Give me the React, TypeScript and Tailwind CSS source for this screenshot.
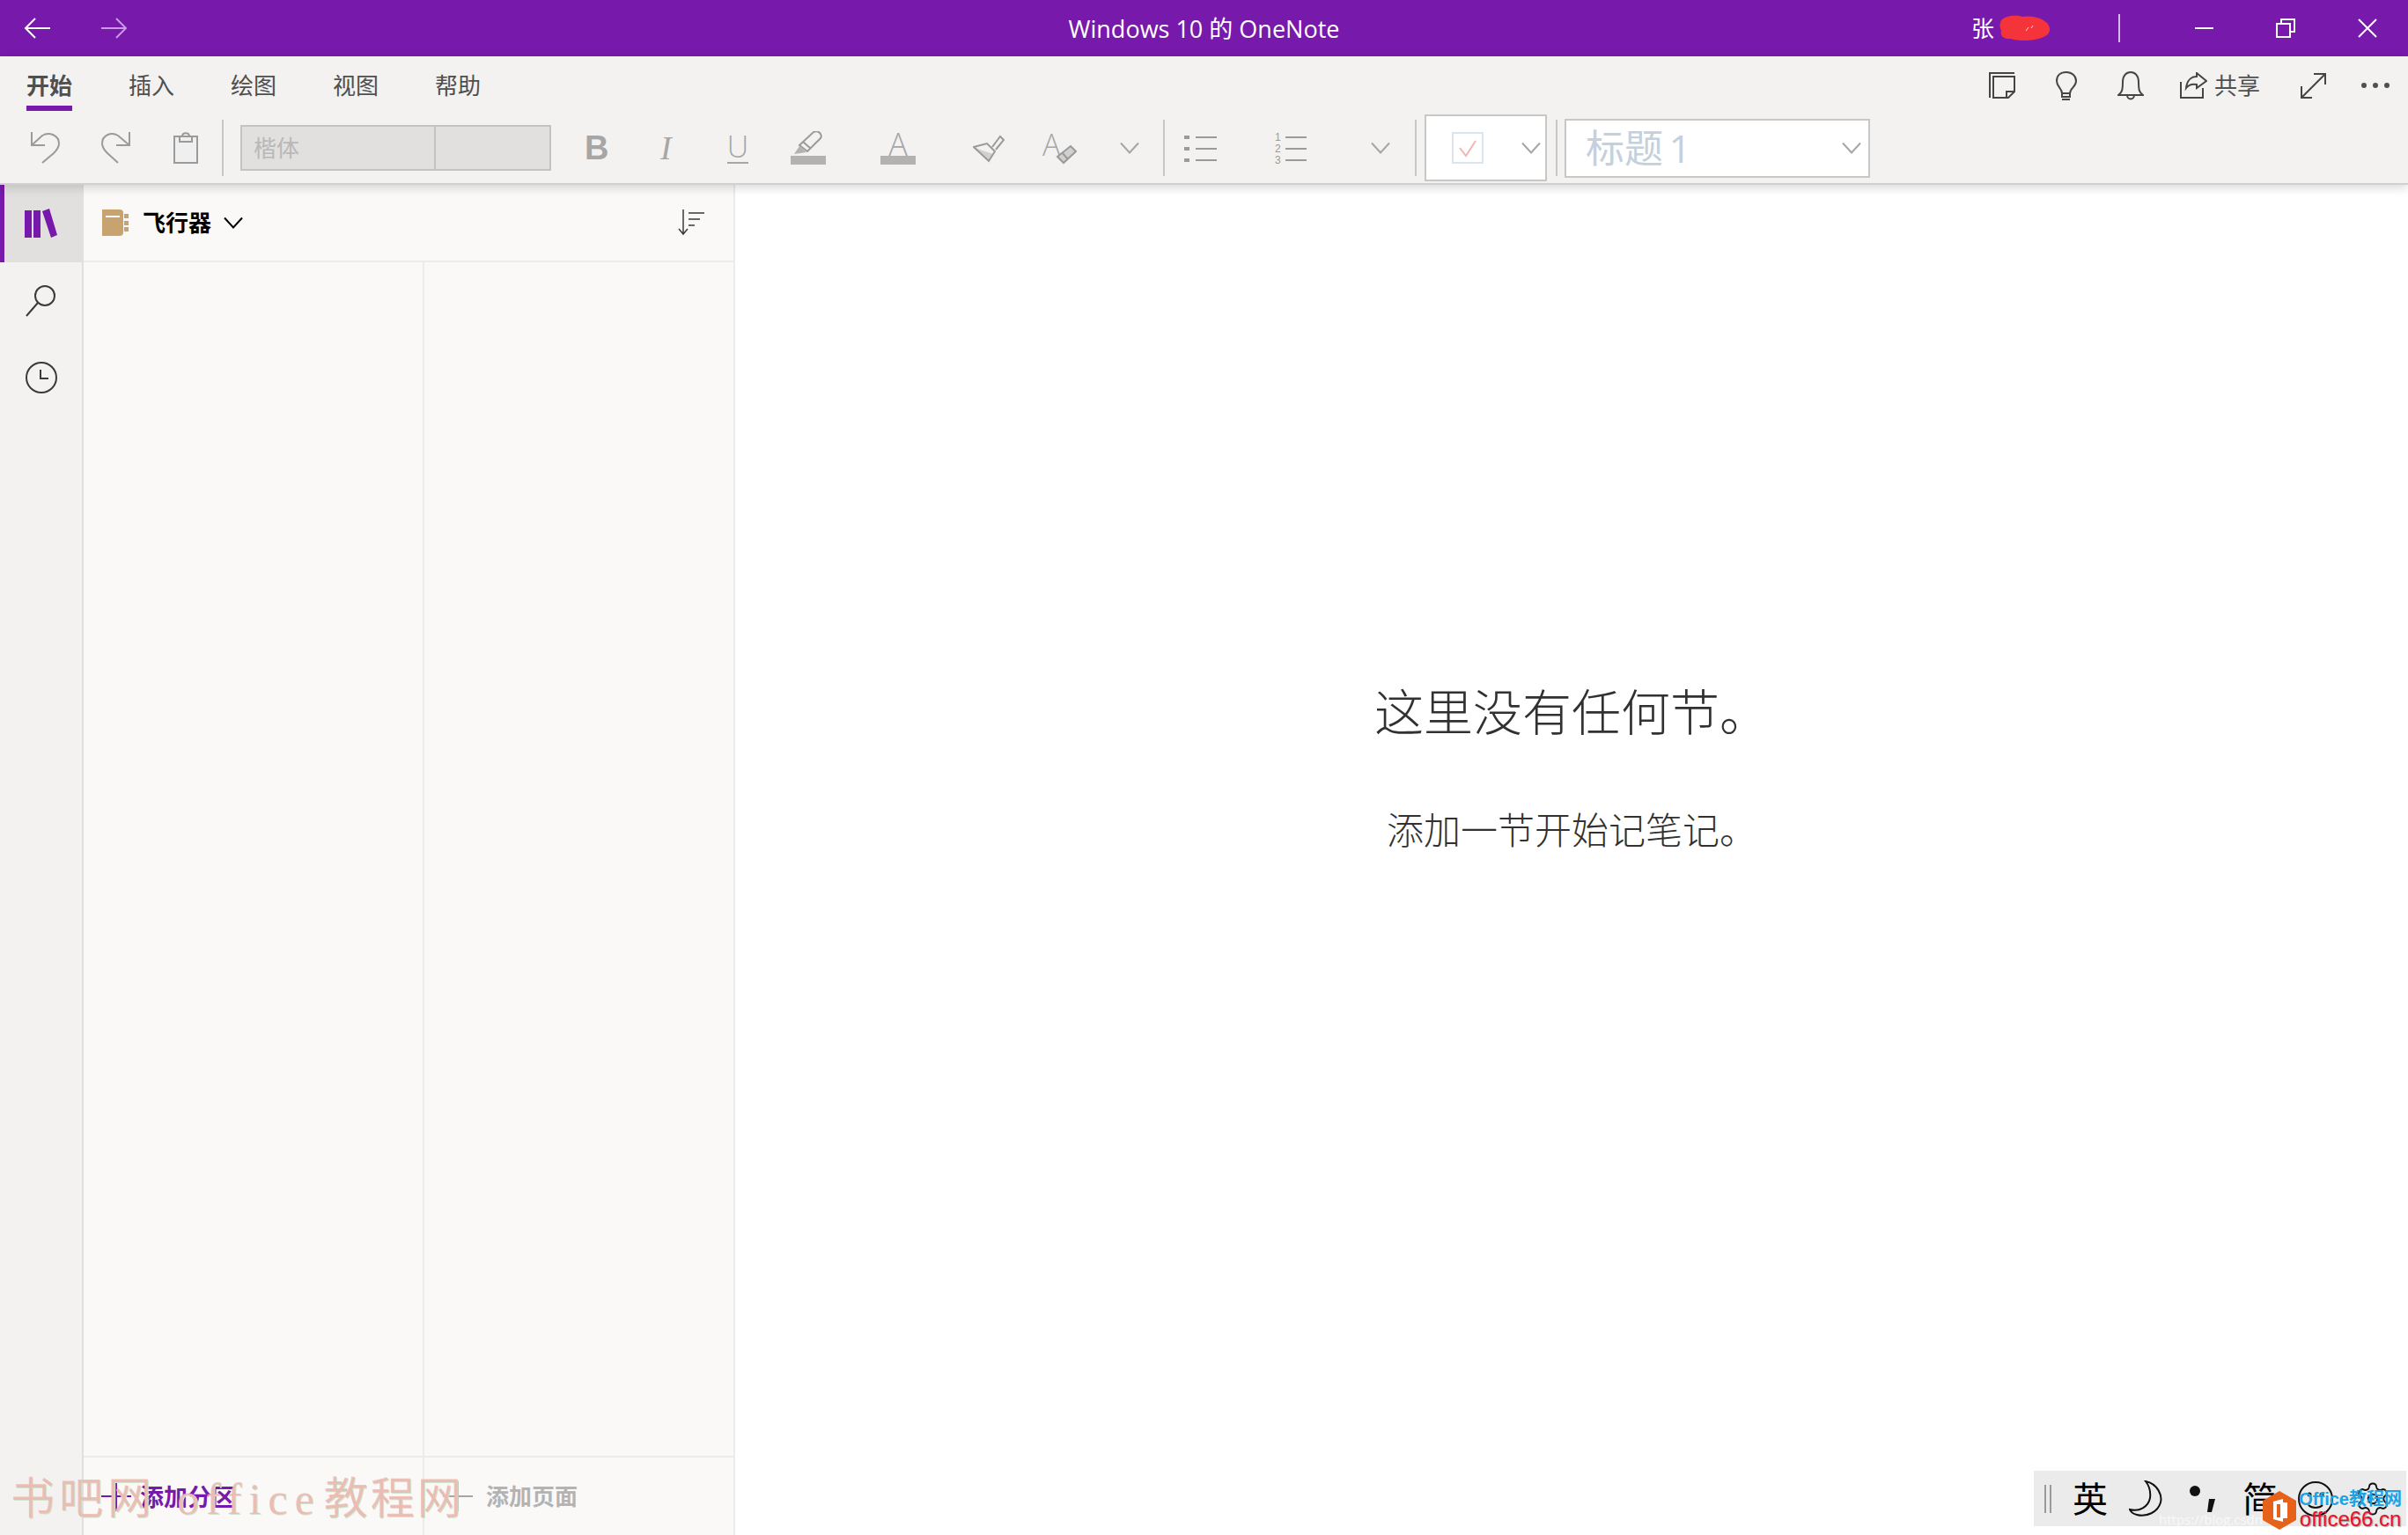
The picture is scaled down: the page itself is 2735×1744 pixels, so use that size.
import { Settings } from "lucide-react"

function Divider() {
  return <div className="h-[64px] w-[2px] shrink-0 bg-[#c8c6c4]" />
}

function Chevron({ className = "", color = "#a6a6a6" }: { className?: string; color?: string }) {
  return (
    <svg viewBox="0 0 22 14" className={`h-[14px] w-[22px] shrink-0 ${className}`} fill="none" stroke={color} strokeWidth="2">
      <path d="M1 1.5 L11 12.5 L21 1.5" />
    </svg>
  )
}

function Icon({ w, h, className = "", children }: { w: number; h: number; className?: string; children: React.ReactNode }) {
  return (
    <svg viewBox={`0 0 ${w} ${h}`} width={w} height={h} className={`shrink-0 ${className}`} fill="none">
      {children}
    </svg>
  )
}

function TitleBar() {
  return (
    <div className="grid h-16 shrink-0 grid-cols-[1fr_auto_1fr] items-center bg-[#7719aa] text-white">
      <div className="flex items-center pl-[27px]">
        <Icon w={30} h={24}>
          <path d="M30 12H2 M13 1 L2 12 L13 23" stroke="#ffffff" strokeWidth="2" />
        </Icon>
        <Icon w={30} h={24} className="ml-[58px]">
          <path d="M0 12H28 M17 1 L28 12 L17 23" stroke="#c99be6" strokeWidth="2" />
        </Icon>
      </div>
      <div className="text-[27px] leading-none">Windows 10 的 OneNote</div>
      <div className="flex items-center justify-end pr-[35px]">
        <span className="text-[26px] leading-none">张</span>
        <Icon w={58} h={30} className="ml-[6px]">
          <path d="M2 6 C8 0 20 0 26 2 C36 0 48 3 54 9 C59 15 58 22 50 25 C40 30 22 30 12 27 C6 28 0 24 2 18 C0 14 0 10 2 6Z" fill="#f4333a" />
          <path d="M30 18 L33 14 M36 15 L38 12" stroke="#ffd8d8" strokeWidth="1" />
        </Icon>
        <div className="ml-[77px] h-8 w-[2px] bg-[#d9b8ea]" />
        <Icon w={22} h={4} className="ml-[85px]">
          <path d="M0 2H21" stroke="#ffffff" strokeWidth="2" />
        </Icon>
        <Icon w={22} h={22} className="ml-[70px]">
          <path d="M6 5V1H21V15H16 M1 6H16V21H1Z" stroke="#ffffff" strokeWidth="2" />
        </Icon>
        <Icon w={22} h={22} className="ml-[71px]">
          <path d="M1 1L21 21 M21 1L1 21" stroke="#ffffff" strokeWidth="2" />
        </Icon>
      </div>
    </div>
  )
}

function RibbonTabs() {
  const tabs = ["开始", "插入", "绘图", "视图", "帮助"]
  const ink = "#454545"
  return (
    <div className="flex h-[66px] shrink-0 items-start pl-[30px]">
      <div className="flex gap-[64px]">
        {tabs.map((t, i) => (
          <div key={t} className="flex w-[52px] flex-col pt-[15px]">
            <span className={`text-[26px] leading-[36px] text-[#4f4f4f] ${i === 0 ? "font-bold" : ""}`}>{t}</span>
            <div className={`mt-[5px] h-[6px] ${i === 0 ? "bg-[#7719aa]" : ""}`} />
          </div>
        ))}
      </div>
      <div className="ml-auto flex h-[66px] items-center pr-[20px] text-[#505050]">
        <Icon w={30} h={30}>
          <path d="M1 29V1H29 M5 5H29V22L22 29H5Z M20 29V22H29" stroke={ink} strokeWidth="2" />
        </Icon>
        <Icon w={24} h={33} className="ml-[46px]">
          <path d="M7 25 C7 19 1 18 1 11 C1 5 5 1 12 1 C18 1 23 5 23 11 C23 18 16 19 16 25Z M7 25V29H16V25 M7 32H16" stroke={ink} strokeWidth="2" />
        </Icon>
        <Icon w={30} h={33} className="ml-[46px]">
          <path d="M1 27 C5 24 6 22 6 12 C6 5 10 1 15 1 C20 1 24 5 24 12 C24 22 25 24 29 27Z M11 27 C11 33 19 33 19 27" stroke={ink} strokeWidth="2" />
        </Icon>
        <Icon w={31} h={30} className="ml-[41px]">
          <path d="M1 11V29H26V18 M7 18 C8 9 13 5 19 5V1L30 10L19 18V14 C14 13 10 14 7 18Z" stroke={ink} strokeWidth="2" />
        </Icon>
        <span className="ml-[8px] text-[26px] leading-none">共享</span>
        <Icon w={31} h={31} className="ml-[45px]">
          <path d="M2 29L29 2 M16 2H29V14 M2 16V29H14" stroke={ink} strokeWidth="2" />
        </Icon>
        <Icon w={33} h={6} className="ml-[39px]">
          <circle cx="3" cy="3" r="3" fill="#505050" />
          <circle cx="16" cy="3" r="3" fill="#505050" />
          <circle cx="29" cy="3" r="3" fill="#505050" />
        </Icon>
      </div>
    </div>
  )
}

function RibbonTools() {
  const gray = "#9a9a9a"
  return (
    <div className="flex h-[76px] shrink-0 items-center pl-[34px] text-[#a6a6a6]">
      <Icon w={34} h={36}>
        <path d="M2 0V15H17 M2 15L14 4 C22 -1 33 4 33 13 C33 18 30 21 27 24 L14 35" stroke={gray} strokeWidth="2" />
      </Icon>
      <Icon w={34} h={36} className="ml-[47px]">
        <path d="M32 0V15H17 M32 15L19 4 C11 -1 1 4 1 13 C1 18 4 21 7 24 L19 35" stroke={gray} strokeWidth="2" />
      </Icon>
      <Icon w={28} h={36} className="ml-[48px]">
        <path d="M1 5H27V35H1Z" fill="#efefef" stroke={gray} strokeWidth="2" />
        <path d="M7 5V11H21V5H18 C18 0 10 0 10 5H7" stroke={gray} strokeWidth="2" />
      </Icon>
      <div className="ml-[27px]"><Divider /></div>
      <div className="ml-[19px] flex h-[52px] w-[353px] shrink-0 border-2 border-[#c4c3c2] bg-[#e1e0df]">
        <div className="flex w-[220px] items-center border-r-2 border-[#c4c3c2] pl-[13px] text-[26px] text-[#b9b8b7]">楷体</div>
      </div>
      <span className="ml-[38px] w-[24px] font-['Liberation_Sans',sans-serif] text-[38px] leading-none font-bold">B</span>
      <span className="ml-[62px] w-[18px] font-['Liberation_Serif',serif] text-[38px] leading-none italic">I</span>
      <div className="ml-[58px] flex w-[24px] flex-col items-center">
        <span className="font-['Open_Sans',sans-serif] text-[34px] leading-[32px] font-light">U</span>
        <div className="mt-[2px] h-[2px] w-[24px] bg-[#a6a6a6]" />
      </div>
      <div className="ml-[48px] flex w-[40px] flex-col">
        <Icon w={40} h={28}>
          <path d="M10 16 L26 1 Q30 -1 33 2 Q36 5 34 8 L19 23Z M14 12 L23 20" stroke={gray} strokeWidth="2" />
          <path d="M10 17 L4 26 L18 24Z" fill="#b3b2b0" />
        </Icon>
        <div className="h-[10px] w-[40px] bg-[#b3b2b0]" />
      </div>
      <div className="ml-[62px] flex w-[40px] flex-col items-center">
        <span className="h-[28px] font-['Open_Sans',sans-serif] text-[36px] leading-[30px] font-light">A</span>
        <div className="h-[10px] w-[40px] bg-[#b3b2b0]" />
      </div>
      <Icon w={36} h={33} className="ml-[65px]">
        <path d="M8 18 L23 23 L18 31 L1 15Z" fill="#d0d0d0" />
        <path d="M1 15 L16 11 L25 20 L18 31Z" stroke={gray} strokeWidth="2" />
        <path d="M22 15 L31 3 L35 7 L26 18" stroke={gray} strokeWidth="2" />
      </Icon>
      <div className="relative ml-[43px] h-[38px] w-[39px]">
        <span className="absolute top-0 left-0 font-['Open_Sans',sans-serif] text-[34px] leading-[30px] font-light">A</span>
        <svg viewBox="0 0 39 38" className="absolute top-0 left-0 h-[38px] w-[39px]" fill="#d0d0d0" stroke={gray} strokeWidth="2">
          <path d="M17 29 L32 17 L38 23 L24 36Z M22 24 L29 32" />
        </svg>
      </div>
      <Chevron className="ml-[49px]" />
      <div className="ml-[27px]"><Divider /></div>
      <Icon w={38} h={36} className="ml-[22px]">
        <path d="M0 4H6V8H0Z M0 17H6V21H0Z M0 30H6V34H0Z" fill={gray} />
        <path d="M13 6H37 M13 19H37 M13 32H37" stroke={gray} strokeWidth="2" />
      </Icon>
      <Icon w={37} h={38} className="ml-[65px] overflow-visible">
        <text x="0" y="11" fontSize="12" fill={gray} fontFamily="Liberation Sans">1</text>
        <text x="0" y="24" fontSize="12" fill={gray} fontFamily="Liberation Sans">2</text>
        <text x="0" y="37" fontSize="12" fill={gray} fontFamily="Liberation Sans">3</text>
        <path d="M12 7H36 M12 20H36 M12 33H36" stroke={gray} strokeWidth="2" />
      </Icon>
      <Chevron className="ml-[72px]" />
      <div className="ml-[28px]"><Divider /></div>
      <div className="ml-[9px] flex h-[76px] w-[139px] shrink-0 items-center border-2 border-[#c8c7c6] bg-white pl-[29px]">
        <Icon w={36} h={36}>
          <path d="M1 1H35V35H1Z" stroke="#dbe6ec" strokeWidth="2" />
          <path d="M9 18L16 27L27 10" stroke="#f2b5b5" strokeWidth="2" />
        </Icon>
        <Chevron className="ml-[43px] h-[12px] w-[18px]" />
      </div>
      <div className="ml-[10px]"><Divider /></div>
      <div className="ml-[8px] flex h-[67px] w-[347px] shrink-0 items-center border-2 border-[#c8c7c6] bg-white pl-[22px] text-[44px] leading-none text-[#c4d1dd]">
        <span className="[word-spacing:-5px]">标题 1</span>
        <Chevron className="mr-[8px] ml-auto h-[12px] w-[18px]" />
      </div>
    </div>
  )
}

function Rail() {
  return (
    <div className="flex w-[95px] shrink-0 flex-col border-r-2 border-[#e1dfdd] bg-[#f3f2f1]">
      <div className="flex h-[88px] items-center justify-center border-l-[5px] border-[#7719aa] bg-[#e1e0df] pr-[5px]">
        <Icon w={38} h={34}>
          <path d="M0 2H8V33H0Z M10 2H18V33H10Z M20 3L28 0L37 30L30 33Z" fill="#7719aa" />
        </Icon>
      </div>
      <div className="flex h-[87px] items-center justify-center pr-[2px]">
        <Icon w={34} h={36}>
          <circle cx="22" cy="12" r="11" stroke="#3b3a39" strokeWidth="2" />
          <path d="M14 20L1 35" stroke="#3b3a39" strokeWidth="2" />
        </Icon>
      </div>
      <div className="flex h-[88px] items-center justify-center">
        <Icon w={38} h={38}>
          <circle cx="19" cy="19" r="17" stroke="#3b3a39" strokeWidth="2" />
          <path d="M18 10V20H27" stroke="#3b3a39" strokeWidth="2" />
        </Icon>
      </div>
    </div>
  )
}

function NotebookPanel() {
  return (
    <div className="flex w-[740px] shrink-0 flex-col border-r-2 border-[#edebe9] bg-[#faf9f8]">
      <div className="flex h-[88px] shrink-0 items-center border-b-2 border-[#edebe9] pl-[21px]">
        <Icon w={30} h={30}>
          <path d="M0 0H20Q24 0 24 4V26Q24 30 20 30H0Z" fill="#c8a36f" />
          <path d="M4 7H20V9H4Z" fill="#ffffff" />
          <path d="M25 5H30V10H25Z M25 13H30V18H25Z M25 20H30V25H25Z" fill="#c8a36f" />
        </Icon>
        <span className="ml-[16px] text-[26px] leading-none font-bold text-black">飞行器</span>
        <Chevron className="ml-[14px] h-[11px] w-[18px]" color="#000000" />
        <Icon w={30} h={30} className="mr-[33px] ml-auto">
          <path d="M6 0V28 M1 22L6 28L11 22" stroke="#3b3a39" strokeWidth="1.5" />
          <path d="M12 4H30 M12 11H25 M12 18H19" stroke="#3b3a39" strokeWidth="1.5" />
        </Icon>
      </div>
      <div className="grid flex-1 grid-cols-[387px_1fr]">
        <div className="border-r-2 border-[#edebe9]" />
        <div />
      </div>
      <div className="relative grid h-[90px] shrink-0 grid-cols-[387px_1fr] border-t-2 border-[#edebe9]">
        <div className="flex items-center border-r-2 border-[#edebe9] pl-[20px]">
          <Icon w={34} h={34}>
            <path d="M17 0V34 M0 17H34" stroke="#7719aa" strokeWidth="2" />
          </Icon>
          <span className="ml-[10px] text-[27px] leading-none font-bold text-[#7719aa]">添加分区</span>
        </div>
        <div className="flex items-center pl-[21px]">
          <Icon w={34} h={34}>
            <path d="M17 0V34 M0 17H34" stroke="#a6a6a6" strokeWidth="2" />
          </Icon>
          <span className="ml-[15px] text-[26px] leading-none font-bold text-[#b3b3b3]">添加页面</span>
        </div>
        <div className="absolute top-[22px] left-[-83px] flex items-center text-[50px] leading-none text-[#eeb4ab]/80 [text-shadow:1px_1px_0_#cfe3cf] font-['Liberation_Serif','Noto_Sans_CJK_SC',serif]">
          <span className="tracking-[5px]">书吧网</span>
          <span className="ml-[24px] tracking-[8px]">office</span>
          <span className="ml-[3px] tracking-[3px]">教程网</span>
        </div>
      </div>
    </div>
  )
}

function ImeBar() {
  return (
    <div className="absolute right-[2px] bottom-[10px] flex h-[63px] w-[423px] items-center bg-[#ebebeb] pl-[12px] text-black">
      <Icon w={8} h={32}>
        <path d="M1 0V32 M7 0V32" stroke="#9a9a9a" strokeWidth="2" />
      </Icon>
      <span className="ml-[24px] w-[40px] text-[40px] leading-none">英</span>
      <Icon w={38} h={42} className="ml-[24px]">
        <path d="M19 1 C33 4 38 17 36 25 C33 36 20 42 9 39 C5 38 2 36 1 33 C12 36 22 30 24 20 C25 12 23 6 19 1Z" stroke="#111111" strokeWidth="2" />
      </Icon>
      <Icon w={29} h={30} className="ml-[31px]">
        <circle cx="6" cy="6" r="6" fill="#111111" />
        <path d="M22 15H29L25 30H20Z" fill="#111111" />
      </Icon>
      <span className="ml-[31px] w-[40px] text-[40px] leading-none">简</span>
      <Icon w={40} h={40} className="ml-[23px]">
        <circle cx="20" cy="20" r="19" stroke="#111111" strokeWidth="2" />
        <circle cx="13" cy="15" r="2.5" fill="#111111" />
        <circle cx="27" cy="15" r="2.5" fill="#111111" />
        <path d="M12 27 C16 31 24 31 28 27" stroke="#111111" strokeWidth="2" />
      </Icon>
      <Settings size={42} strokeWidth={1.1} className="ml-[24px] shrink-0 text-[#111111]" />
    </div>
  )
}

function SiteMark() {
  return (
    <div className="absolute right-[7px] bottom-[6px] flex items-center">
      <Icon w={38} h={44}>
        <path d="M19 0L38 11V33L19 44L0 33V11Z" fill="#e6621a" />
        <path d="M12 12L23 9V35L12 32Z M23 13H28V31H23Z" fill="#ffffff" />
        <path d="M16 15H20V30H16Z" fill="#e6621a" />
      </Icon>
      <div className="ml-[3px] flex flex-col items-center font-['Liberation_Sans','Noto_Sans_CJK_SC',sans-serif] leading-none font-bold">
        <span className="text-[20px] text-[#1ba3e5]">Office教程网</span>
        <span className="mt-[1px] text-[24px] font-normal text-[#e8112d] [text-shadow:1px_1px_1px_rgba(0,0,0,0.35)]">office66.cn</span>
      </div>
    </div>
  )
}

export default function App() {
  return (
    <div className="relative flex h-[1744px] w-[2735px] flex-col overflow-hidden bg-white font-['Open_Sans','Noto_Sans_CJK_SC',sans-serif]">
      <TitleBar />
      <div className="relative z-10 flex h-[146px] shrink-0 flex-col border-b-2 border-[#d2d0ce] bg-[#f3f2f1] shadow-[0_4px_10px_rgba(0,0,0,0.14)]">
        <RibbonTabs />
        <RibbonTools />
      </div>
      <div className="flex flex-1">
        <Rail />
        <NotebookPanel />
        <div className="flex flex-1 flex-col items-center pt-[560px] text-[#323130]">
          <h1 className="text-[56px] leading-[76px] font-light">这里没有任何节。</h1>
          <p className="mt-[69px] text-[42px] leading-[56px] font-light">添加一节开始记笔记。</p>
        </div>
      </div>
      <ImeBar />
      <span className="absolute right-[165px] bottom-[10px] text-[15px] leading-none text-white/70">https://blog.csdn</span>
      <SiteMark />
    </div>
  )
}
